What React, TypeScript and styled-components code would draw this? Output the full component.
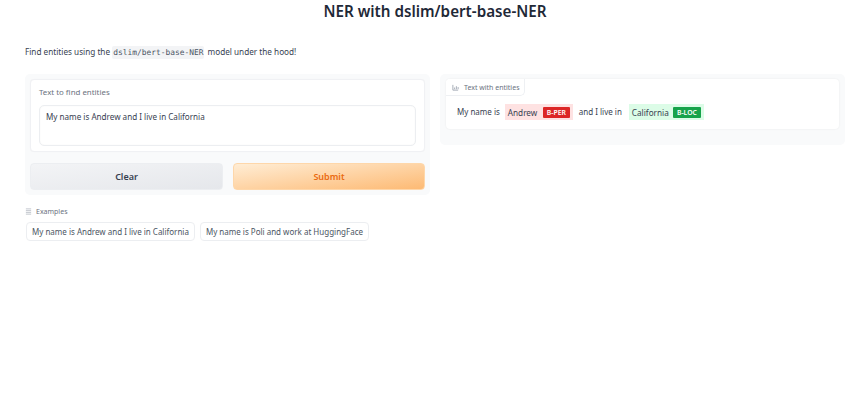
import React from "react";
import styled, { createGlobalStyle } from "styled-components";

const Global = createGlobalStyle`
  html, body { margin: 0; padding: 0; background: #fff; }
  body { font-family: "Noto Sans", "Open Sans", sans-serif; color: #374151; }
  * { box-sizing: border-box; }
`;
const Page = styled.div`
  width: 867px; height: 411px; padding: 0 22px 0 25px; overflow: hidden;
`;
const Title = styled.h1`
  margin: 0; padding-top: 1px; height: 45px; line-height: 21px; text-align: center;
  font-size: 15.2px; font-weight: 600; color: #1f2937; width: 820px;
`;
const Intro = styled.p`
  margin: 0; height: 14px; line-height: 14px; font-size: 8.2px; color: #374151; display: flex; align-items: center;
`;
const Code = styled.code`
  font-family: "DejaVu Sans Mono", monospace; font-size: 7.9px; background: #f3f4f6; color: #4b5563;
  border-radius: 2px; padding: 0 1px; margin: 0 1px 0 0; line-height: 13px;
`;
const Columns = styled.div`
  display: grid; grid-template-columns: 405px 405px; gap: 10px; margin-top: 15px; align-items: start;
`;
const Panel = styled.section<{ $h: number }>`
  background: #f9fafb; border-radius: 5px; padding: 5px; height: ${p => p.$h}px;
`;
const InputCard = styled.div`
  background: #fff; border: 1px solid #f0f1f4; border-radius: 4px; height: 73px; padding: 6px 8px 0;
  box-shadow: 0 0 1px rgba(0,0,0,.04);
`;
const FieldLabel = styled.label`
  display: block; font-size: 7.9px; line-height: 12px; color: #6b7280; margin-bottom: 7px;
`;
const TextBox = styled.div`
  height: 41px; border: 1px solid #eceef1; border-radius: 5px; padding: 4px 6px; font-size: 8.1px; line-height: 14px; color: #374151;
  box-shadow: inset 0 0 2px rgba(0,0,0,.04);
`;
const Buttons = styled.div`
  display: grid; grid-template-columns: 193px 192px; gap: 10px; margin-top: 11px;
`;
const Action = styled.button<{ $primary?: boolean }>`
  height: 27px; border: 1px solid ${p => (p.$primary ? "#fed7aa" : "#eceef1")}; border-radius: 4px; padding: 0;
  font-family: inherit; font-size: 9px; font-weight: 600;
  color: ${p => (p.$primary ? "#ea6a10" : "#374151")};
  background: ${p => (p.$primary ? "linear-gradient(to bottom right,#ffedd5,#fdba74)" : "linear-gradient(to bottom right,#f3f4f6,#e5e7eb)")};
`;
const ExamplesHead = styled.div`
  display: flex; align-items: center; gap: 4px; margin-top: 10px; height: 12px; font-size: 7px; color: #6b7280;
`;
const ExampleRow = styled.div`
  display: flex; gap: 5px; margin-top: 5px; margin-left: 1px;
`;
const Example = styled.button`
  height: 19px; border: 1px solid #eceef1; border-radius: 4px; background: #fff; padding: 0 5px;
  font-family: inherit; font-size: 8px; color: #4b5563; white-space: nowrap;
`;
const ResultCard = styled.div`
  position: relative; background: #fff; border-radius: 4px; height: 50px; margin: 0 1px;
  box-shadow: 0 0 2px rgba(0,0,0,.08); padding: 25px 7px 0 11px; display: flex; align-items: flex-start; font-size: 8.2px; color: #374151;
`;
const Tab = styled.div`
  position: absolute; left: 0; top: 0; height: 17px; width: 79px; display: flex; align-items: center; gap: 5px; padding-left: 6px;
  font-size: 7px; color: #6b7280; background: #fff; border-right: 1px solid #eef0f3; border-bottom: 1px solid #eef0f3; border-radius: 4px 0 5px 0;
`;
const Plain = styled.span`
  font-size: 8px; line-height: 16px; white-space: nowrap;
`;
const Mark = styled.span<{ $bg: string; $w: number; $ml: number }>`
  display: flex; align-items: center; justify-content: space-between; height: 16px; width: ${p => p.$w}px; margin: 0 6px 0 ${p => p.$ml}px;
  background: ${p => p.$bg}; padding: 0 3px 0 3px; color: #374151; white-space: nowrap;
`;
const Badge = styled.span<{ $bg: string }>`
  display: inline-block; background: ${p => p.$bg}; color: #fff; font-size: 6.8px; font-weight: 600; line-height: 11px; height: 11px;
  padding: 0 4px; border-radius: 1px;
`;
const Icon = styled.svg`
  width: 7px; height: 7px; flex: none; color: #9ca3af;
`;

export default function App() {
  return (
    <Page>
      <Global />
      <Title>NER with dslim/bert-base-NER</Title>
      <Intro>Find entities using the&nbsp;<Code>dslim/bert-base-NER</Code>&nbsp;model under the hood!</Intro>
      <Columns>
        <div>
          <Panel $h={121}>
            <InputCard>
              <FieldLabel>Text to find entities</FieldLabel>
              <TextBox>My name is Andrew and I live in California</TextBox>
            </InputCard>
            <Buttons>
              <Action>Clear</Action>
              <Action $primary>Submit</Action>
            </Buttons>
          </Panel>
          <ExamplesHead>
            <Icon viewBox="0 0 8 8" fill="none" stroke="currentColor" strokeWidth=".7"><path d="M1 1h6M1 3h6M1 5h6M1 7h6" /></Icon>
            Examples
          </ExamplesHead>
          <ExampleRow>
            <Example>My name is Andrew and I live in California</Example>
            <Example>My name is Poli and work at HuggingFace</Example>
          </ExampleRow>
        </div>
        <Panel $h={71}>
          <ResultCard>
            <Tab>
              <Icon viewBox="0 0 8 8" fill="none" stroke="currentColor" strokeWidth="1"><path d="M1 1v6h6M3 6V4M5 6V2.5M7 6V3.5" /></Icon>
              Text with entities
            </Tab>
            <Plain>My name is</Plain>
            <Mark $bg="#fee2e2" $w={68} $ml={5}>Andrew<Badge $bg="#dc2626">B-PER</Badge></Mark>
            <Plain>and I live in</Plain>
            <Mark $bg="#dcfce7" $w={75} $ml={7}>California<Badge $bg="#16a34a">B-LOC</Badge></Mark>
          </ResultCard>
        </Panel>
      </Columns>
    </Page>
  );
}
